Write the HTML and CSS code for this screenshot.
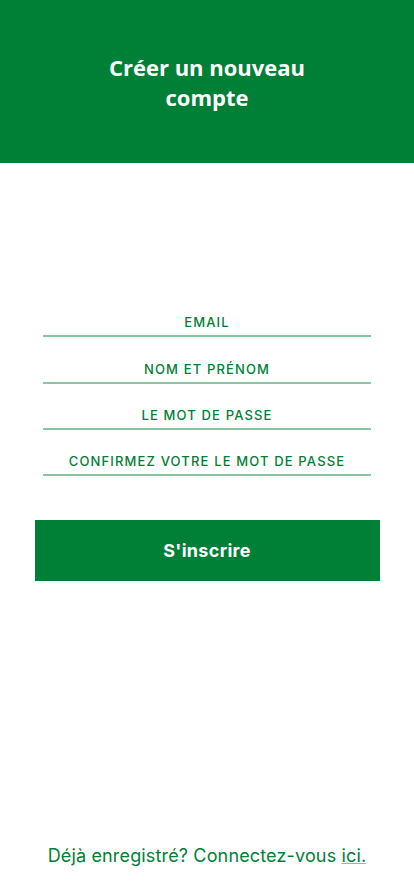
FILE: index.html
```html
<!DOCTYPE html>
<html lang="fr">
<head>
<meta charset="utf-8">
<title>Créer un nouveau compte</title>
<link rel="stylesheet" href="styles.css">
</head>
<body>
<div class="page">
  <header class="header">
    <h1 class="title">Créer un nouveau<br>compte</h1>
  </header>
  <main class="main">
    <form class="form">
      <div class="field"><span class="label">EMAIL</span></div>
      <div class="field field-wide"><span class="label">NOM ET PRÉNOM</span></div>
      <div class="field"><span class="label">LE MOT DE PASSE</span></div>
      <div class="field"><span class="label">CONFIRMEZ VOTRE LE MOT DE PASSE</span></div>
    </form>
    <button class="submit" type="button">S'inscrire</button>
  </main>
  <footer class="footer">
    <p class="footer-text">Déjà enregistré? Connectez-vous <a class="link" href="#">ici.</a></p>
  </footer>
</div>
</body>
</html>
```

FILE: styles.css
```css
* { box-sizing: border-box; }
html, body { margin: 0; padding: 0; background: #ffffff; }
.page {
  min-height: 896px;
  display: flex;
  flex-direction: column;
}
.header {
  height: 163px;
  background: #008037;
  display: flex;
  align-items: center;
  justify-content: center;
}
.title {
  margin: 0;
  color: #ffffff;
  font-family: "Open Sans", sans-serif;
  font-weight: 700;
  font-size: 22px;
  line-height: 30px;
  text-align: center;
}
.main {
  display: flex;
  flex-direction: column;
  align-items: center;
  padding-top: 128px;
}
.form {
  width: 328px;
  display: flex;
  flex-direction: column;
}
.field {
  padding-top: 21px;
  padding-bottom: 3px;
  border-bottom: 2px solid #86c79f;
  text-align: center;
  line-height: 20px;
}
.field-wide {
  padding-top: 22px;
}
.label {
  font-family: "Inter", sans-serif;
  font-weight: 500;
  font-size: 13px;
  letter-spacing: 1.15px;
  color: #008037;
}
.submit {
  margin-top: 44px;
  width: 345px;
  height: 61px;
  border: 0;
  background: #008037;
  color: #ffffff;
  font-family: "Inter", sans-serif;
  font-weight: 700;
  font-size: 18px;
  letter-spacing: 0.3px;
}
.footer {
  margin-top: auto;
  padding-bottom: 28px;
  text-align: center;
}
.footer-text {
  margin: 0;
  font-family: "Inter", sans-serif;
  font-size: 18px;
  letter-spacing: 0.15px;
  line-height: 24px;
  color: #008037;
}
.link {
  color: #008037;
  text-decoration: underline;
  text-decoration-color: #86c79f;
}
```
